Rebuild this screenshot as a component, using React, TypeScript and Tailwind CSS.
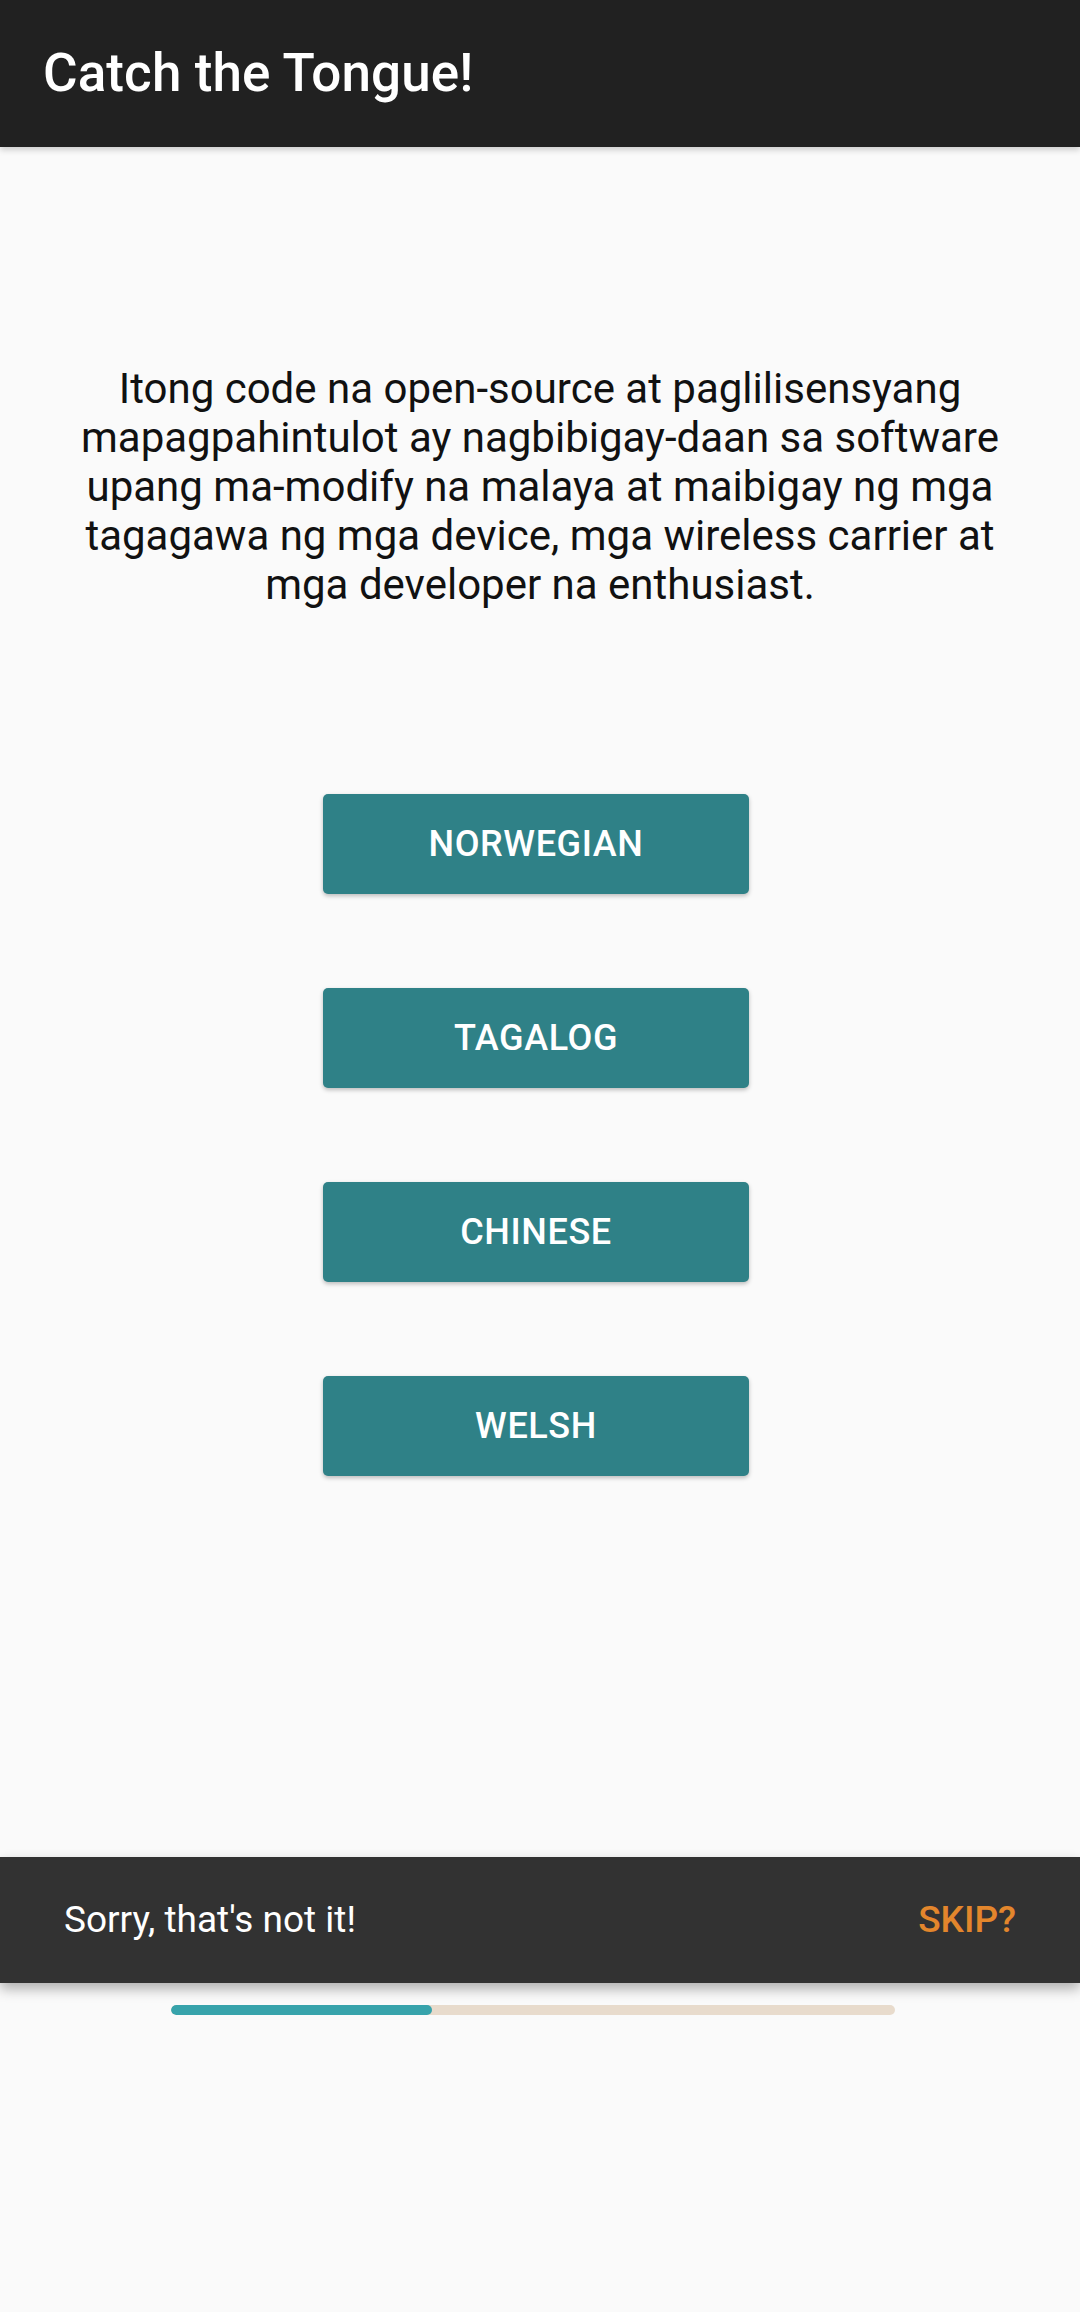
const LANGS = ["NORWEGIAN", "TAGALOG", "CHINESE", "WELSH"];

const PROGRESS = 0.36; // fraction of questions answered

export default function App() {
  return (
    <div className="flex min-h-[2312px] w-[1080px] flex-col bg-[#fafafa] font-['Roboto',sans-serif]">
      {/* Toolbar */}
      <header className="relative z-10 flex h-[147px] items-center bg-[#212121] px-[43px] shadow-[0_3px_6px_rgba(0,0,0,0.18)]">
        <h1 className="text-[53px] font-medium tracking-[0.1px] text-white">Catch the Tongue!</h1>
      </header>

      {/* Question */}
      <p className="px-[42px] pt-[217px] text-center text-[42px] leading-[49px] text-[#111]">
        Itong code na open-source at paglilisensyang mapagpahintulot ay nagbibigay-daan sa software
        upang ma-modify na malaya at maibigay ng mga tagagawa ng mga device, mga wireless carrier at
        mga developer na enthusiast.
      </p>

      {/* Answers */}
      <div className="mt-[185px] flex flex-col items-center gap-[94px] pr-[8px]">
        {LANGS.map((lang) => (
          <button
            key={lang}
            className="h-[100px] w-[426px] rounded-[5px] bg-[#2f8187] text-[36px] font-medium tracking-[0.6px] text-white shadow-[0_2px_4px_rgba(0,0,0,0.25)]"
          >
            {lang}
          </button>
        ))}
      </div>

      {/* Snackbar */}
      <div className="mt-[381px] flex h-[126px] items-center justify-between bg-[#323232] px-[64px] shadow-[0_6px_12px_rgba(0,0,0,0.3)]">
        <span className="text-[37px] text-white">Sorry, that's not it!</span>
        <span className="text-[37px] font-medium text-[#e3862c]">SKIP?</span>
      </div>

      {/* Progress */}
      <div className="ml-[171px] mt-[22px] h-[10px] w-[724px] overflow-hidden rounded-full bg-[#e8dbcc]">
        <div className="h-full rounded-full bg-[#37a3ab]" style={{ width: `${PROGRESS * 100}%` }} />
      </div>
    </div>
  );
}
